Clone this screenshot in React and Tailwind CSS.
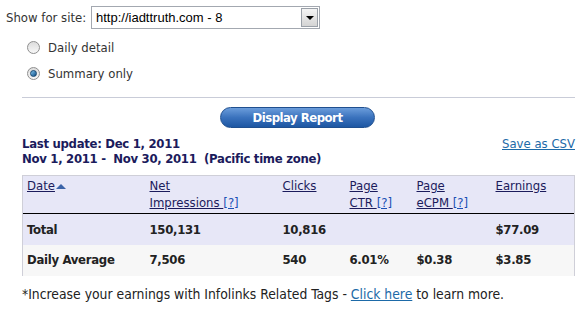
import { useState } from 'react';

const font = { fontFamily: '"DejaVu Sans Condensed", "DejaVu Sans", sans-serif' };

function Radio({ checked, label, onChange }) {
    return (
        <label className="flex items-center gap-[8px] cursor-pointer" onClick={onChange}>
            <span className="w-[13px] h-[13px] rounded-full border border-[#8f8f8f] bg-gradient-to-b from-[#dcdcdc] to-[#f8f8f8] flex items-center justify-center">
                {checked && (
                    <span className="w-[7px] h-[7px] rounded-full bg-gradient-to-br from-[#7fc4ef] to-[#0b4f86] border border-[#16466f]" />
                )}
            </span>
            <span className="text-[13px] text-[#333]">{label}</span>
        </label>
    );
}

function HelpLink() {
    return <a href="#" className="text-[#1a4fb5] underline">[?]</a>;
}

export default function App() {
    const [mode, setMode] = useState('summary');

    return (
        <div className="w-[585px] h-[311px] bg-white overflow-hidden" style={font}>
            <div className="flex items-center pt-[6px] pl-[6px]">
                <span className="text-[13px] text-[#333] w-[85px]">Show for site:</span>
                <div className="w-[229px] h-[23px] border border-[#a3a8b0] flex items-center justify-between bg-white">
                    <span className="pl-[4px] text-[13px] text-black" style={{ fontFamily: '"Liberation Sans", Arial, sans-serif' }}>
                        http://iadttruth.com - 8
                    </span>
                    <span className="w-[17px] h-[19px] mr-[1px] border border-[#9aa0a8] bg-gradient-to-b from-[#f4f4f4] to-[#d4d4d4] flex items-center justify-center">
                        <span className="w-0 h-0 border-l-[4px] border-r-[4px] border-t-[4px] border-l-transparent border-r-transparent border-t-black" />
                    </span>
                </div>
            </div>

            <div className="pl-[27px] mt-[9px] flex flex-col gap-[6px]">
                <Radio checked={mode === 'daily'} label="Daily detail" onChange={() => setMode('daily')} />
                <Radio checked={mode === 'summary'} label="Summary only" onChange={() => setMode('summary')} />
            </div>

            <div className="ml-[22px] mr-[10px] mt-[14px] border-t border-[#c9ccd8]" />

            <div className="flex justify-center pl-[10px] mt-[9px]">
                <button className="w-[155px] h-[21px] rounded-full border border-[#1f4f8f] bg-gradient-to-b from-[#6b9ddb] via-[#3a72bd] to-[#1d57a3] text-white font-bold text-[13px] tracking-[-0.5px] leading-none">
                    Display Report
                </button>
            </div>

            <div className="flex justify-between items-start pl-[22px] pr-[10px] mt-[8px]">
                <div className="text-[13px] text-[#1b1b5c] font-bold tracking-[-0.3px] leading-[15px]">
                    <div>Last update: Dec 1, 2011</div>
                    <div>Nov 1, 2011 -&nbsp; Nov 30, 2011&nbsp; (Pacific time zone)</div>
                </div>
                <a href="#" className="text-[13px] text-[#1d6aa8] underline leading-[15px]">Save as CSV</a>
            </div>

            <table className="ml-[22px] mt-[9px] w-[553px] border-collapse text-[13px] table-fixed">
                <colgroup>
                    <col className="w-[123px]" />
                    <col className="w-[133px]" />
                    <col className="w-[67px]" />
                    <col className="w-[67px]" />
                    <col className="w-[79px]" />
                    <col />
                </colgroup>
                <thead>
                    <tr className="bg-[#e7e7f7] border-t border-l border-r border-[#cfcfd8] text-left align-top">
                        <th className="font-normal pl-[4px] pt-[1px] h-[38px] leading-[17px]">
                            <a href="#" className="text-[#1b1b5c] underline">Date</a>
                            <span className="inline-block align-middle ml-[1px] w-0 h-0 border-l-[5px] border-r-[5px] border-b-[5px] border-l-transparent border-r-transparent border-b-[#3b63a8]" />
                        </th>
                        <th className="font-normal pl-[4px] pt-[1px] leading-[17px]">
                            <a href="#" className="text-[#1b1b5c] underline">Net<br />Impressions </a><HelpLink />
                        </th>
                        <th className="font-normal pl-[4px] pt-[1px] leading-[17px]">
                            <a href="#" className="text-[#1b1b5c] underline">Clicks</a>
                        </th>
                        <th className="font-normal pl-[4px] pt-[1px] leading-[17px]">
                            <a href="#" className="text-[#1b1b5c] underline">Page<br />CTR </a><HelpLink />
                        </th>
                        <th className="font-normal pl-[4px] pt-[1px] leading-[17px]">
                            <a href="#" className="text-[#1b1b5c] underline">Page<br />eCPM </a><HelpLink />
                        </th>
                        <th className="font-normal pl-[4px] pt-[1px] leading-[17px]">
                            <a href="#" className="text-[#1b1b5c] underline">Earnings</a>
                        </th>
                    </tr>
                </thead>
                <tbody className="font-bold text-[#222] tracking-[-0.3px]">
                    <tr className="bg-[#e7e7f7] border-t border-black border-l border-r border-l-[#cfcfd8] border-r-[#cfcfd8] h-[31px]">
                        <td className="pl-[4px]">Total</td>
                        <td className="pl-[4px]">150,131</td>
                        <td className="pl-[4px]">10,816</td>
                        <td className="pl-[4px]"></td>
                        <td className="pl-[4px]"></td>
                        <td className="pl-[4px]">$77.09</td>
                    </tr>
                    <tr className="bg-[#f7f7f7] border-l border-r border-[#cfcfd8] h-[31px]">
                        <td className="pl-[4px]">Daily Average</td>
                        <td className="pl-[4px]">7,506</td>
                        <td className="pl-[4px]">540</td>
                        <td className="pl-[4px]">6.01%</td>
                        <td className="pl-[4px]">$0.38</td>
                        <td className="pl-[4px]">$3.85</td>
                    </tr>
                </tbody>
            </table>

            <p className="pl-[22px] mt-[8px] text-[13.8px] text-[#222]">
                *Increase your earnings with Infolinks Related Tags - <a href="#" className="text-[#1d6aa8] underline">Click here</a> to learn more.
            </p>
        </div>
    );
}
